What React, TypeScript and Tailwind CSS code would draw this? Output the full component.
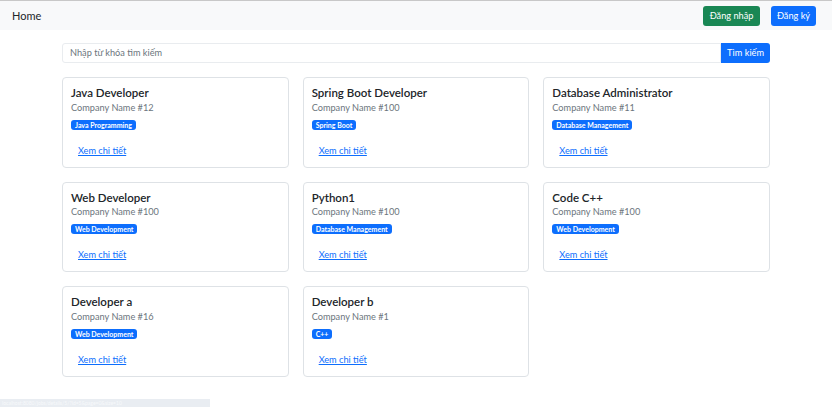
const jobs = [
  { title: "Java Developer", company: "Company Name #12", tag: "Java Programming" },
  { title: "Spring Boot Developer", company: "Company Name #100", tag: "Spring Boot" },
  { title: "Database Administrator", company: "Company Name #11", tag: "Database Management" },
  { title: "Web Developer", company: "Company Name #100", tag: "Web Development" },
  { title: "Python1", company: "Company Name #100", tag: "Database Management" },
  { title: "Code C++", company: "Company Name #100", tag: "Web Development" },
  { title: "Developer a", company: "Company Name #16", tag: "Web Development" },
  { title: "Developer b", company: "Company Name #1", tag: "C++" },
]

const JobCard = ({ job }: { job: (typeof jobs)[number] }) => (
  <div className="flex h-[90.5px] flex-col items-start rounded-[4px] border border-[#dee2e6] bg-white px-[8px] pt-[8px]">
    <h5 className="text-[11.5px] leading-[14px] font-semibold text-[#212529]">{job.title}</h5>
    <p className="mt-[1.5px] text-[9.2px] leading-[11px] text-[#6c757d]">{job.company}</p>
    <span className="mt-[7px] rounded-[3px] bg-[#0d6efd] px-[4px] py-[1px] text-[7px] leading-[8px] font-bold text-white">
      {job.tag}
    </span>
    <a href="#" className="mt-[15px] ml-[7px] text-[9.2px] leading-[11px] text-[#0d6efd] underline">
      Xem chi tiết
    </a>
  </div>
)

export default function App() {
  return (
    <div className="relative min-h-[407px] bg-white font-['Lato','Noto_Sans',sans-serif] text-[#212529]">
      <nav className="flex h-[30px] items-center justify-between border-t border-[#c8c8c8] bg-[#f8f9fa] pl-[12px] pr-[16px]">
        <span className="text-[11px] leading-none">Home</span>
        <div className="flex items-center gap-[11px]">
          <button className="h-[20px] w-[57px] rounded-[3px] bg-[#198754] text-[9.2px] text-white">Đăng nhập</button>
          <button className="h-[20px] w-[45px] rounded-[3px] bg-[#0d6efd] text-[9.2px] text-white">Đăng ký</button>
        </div>
      </nav>

      <div className="mx-auto w-[708px] pt-[13px]">
        <div className="flex h-[20px]">
          <input
            placeholder="Nhập từ khóa tìm kiếm"
            className="flex-1 rounded-l-[3px] border border-[#e9ecef] px-[7px] text-[9.2px] outline-none placeholder:text-[#6c757d]"
          />
          <button className="w-[49px] rounded-r-[3px] bg-[#0d6efd] text-[9.2px] text-white">Tìm kiếm</button>
        </div>

        <div className="mt-[14px] grid grid-cols-3 gap-x-[14px] gap-y-[14px]">
          {jobs.map((job) => (
            <JobCard key={job.title} job={job} />
          ))}
        </div>
      </div>

      <div className="absolute bottom-0 left-0 h-[8px] w-[210px] bg-[#e9edf2] px-[2px] text-[5px] leading-[8px] text-[#f7f9fb]">
        localhost:8080/jobs/details/5/?id=5&page=0&size=10
      </div>
    </div>
  )
}
